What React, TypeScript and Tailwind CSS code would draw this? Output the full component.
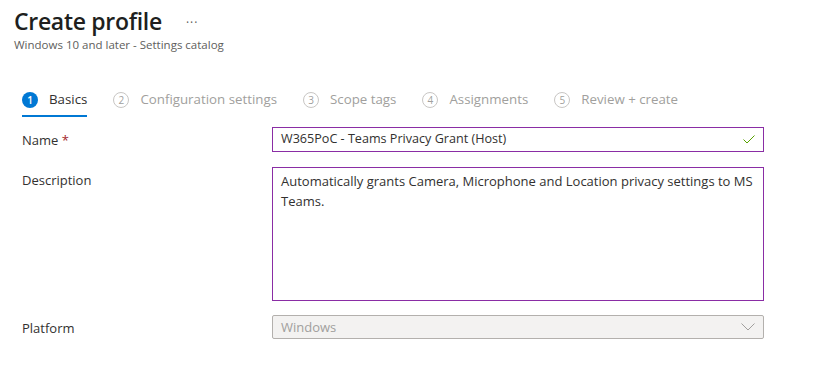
const steps = [
  { n: 1, label: "Basics", active: true },
  { n: 2, label: "Configuration settings" },
  { n: 3, label: "Scope tags" },
  { n: 4, label: "Assignments" },
  { n: 5, label: "Review + create" },
];

const Step = ({ n, label, active }: { n: number; label: string; active?: boolean }) => (
  <div className={`flex h-[32px] items-center gap-[11px] border-b-2 ${active ? "border-[#0078d4]" : "border-transparent"}`}>
    <span
      className={`flex h-[16px] w-[16px] items-center justify-center rounded-full text-[10px] leading-none ${
        active ? "bg-[#0078d4] font-semibold text-white" : "border border-[#c8c6c4] text-[#a19f9d]"
      }`}
    >
      {n}
    </span>
    <span className={`text-[13.3px] ${active ? "text-[#323130]" : "text-[#a19f9d]"}`}>{label}</span>
  </div>
);

const Label = ({ children }: { children: React.ReactNode }) => (
  <div className="w-[250px] shrink-0 pt-[2px] text-[13px] text-[#323130]">{children}</div>
);

export default function App() {
  return (
    <div className="h-[391px] w-[814px] bg-white" style={{ fontFamily: '"Open Sans", "Noto Sans", sans-serif' }}>
      <div className="px-[14px] pt-[3px]">
        <div className="flex items-center">
          <h1 className="text-[23px] font-semibold leading-[36px] tracking-[-0.3px] text-[#201f1e]">Create profile</h1>
          <span className="ml-[24px] mt-[4px] text-[12px] tracking-[1px] text-[#605e5c]">···</span>
        </div>
        <div className="mt-[-3px] text-[11.5px] text-[#605e5c]">Windows 10 and later - Settings catalog</div>
      </div>

      <div className="mt-[32px] flex gap-[26px] pl-[22px]">
        {steps.map((s) => (
          <Step key={s.n} {...s} />
        ))}
      </div>

      <div className="mt-[10px] flex flex-col pl-[22px]">
        <div className="flex items-center">
          <Label>
            Name <span className="text-[#a4262c]">*</span>
          </Label>
          <div className="flex h-[25px] w-[492px] items-center justify-between border border-[#8a2da5] px-[8px] text-[12.6px] text-[#323130]">
            <span>W365PoC - Teams Privacy Grant (Host)</span>
            <svg width="12" height="9" viewBox="0 0 12 9" fill="none">
              <path d="M0.5 4.5 L4 8 L11.5 0.5" stroke="#57a300" strokeWidth="1" />
            </svg>
          </div>
        </div>

        <div className="mt-[15px] flex items-start">
          <div className="pt-[2px]">
            <Label>Description</Label>
          </div>
          <div className="h-[134px] w-[492px] border border-[#8a2da5] px-[8px] pt-[3px] text-[13px] leading-[20px] text-[#323130]">
            Automatically grants Camera, Microphone and Location privacy settings to MS Teams.
          </div>
        </div>

        <div className="mt-[14px] flex items-center">
          <Label>Platform</Label>
          <div className="flex h-[24px] w-[492px] items-center justify-between rounded-[2px] border border-[#b3b0ad] bg-[#f3f2f1] pl-[8px] pr-[8px] text-[13px] text-[#a19f9d]">
            <span>Windows</span>
            <svg width="14" height="8" viewBox="0 0 14 8" fill="none">
              <path d="M0.5 0.5 L7 7 L13.5 0.5" stroke="#a19f9d" strokeWidth="1" />
            </svg>
          </div>
        </div>
      </div>
    </div>
  );
}
